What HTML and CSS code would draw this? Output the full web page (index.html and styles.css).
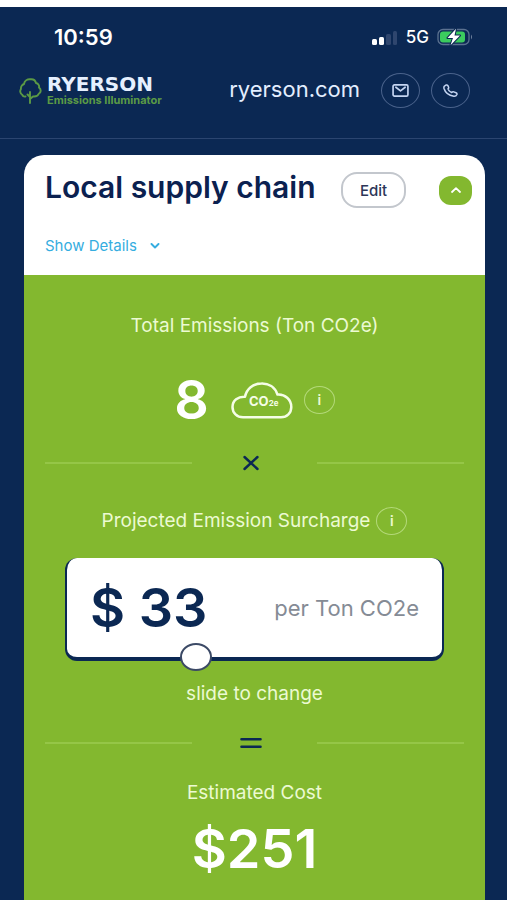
FILE: index.html
```html
<!DOCTYPE html>
<html lang="en">
<head>
<meta charset="utf-8">
<meta name="viewport" content="width=device-width, initial-scale=1">
<title>Ryerson Emissions Illuminator</title>
<link rel="stylesheet" href="styles.css">
</head>
<body>
<div class="status">
  <span class="time">10:59</span>
  <div class="signals">
    <svg width="26" height="16" viewBox="0 0 26 16" aria-hidden="true">
      <rect x="0" y="10" width="5" height="6" rx="1.500" fill="#fff"/>
      <rect x="7" y="8" width="5" height="8" rx="1.500" fill="#fff"/>
      <rect x="14" y="5" width="5" height="11" rx="1.500" fill="#2f466e"/>
      <rect x="21" y="2" width="4" height="14" rx="1.500" fill="#2f466e"/>
    </svg>
    <span class="network">5G</span>
    <svg width="36" height="18" viewBox="0 0 36 18" aria-hidden="true">
      <rect x="1" y="1.500" width="31" height="15" rx="5" fill="none" stroke="#5b7190" stroke-width="1.300"/>
      <rect x="3" y="3.500" width="25" height="11" rx="3" fill="#3bcb5e"/>
      <path d="M34 6.500Q36 9 34 11.500Z" fill="#71839f"/>
      <path d="M19 .8 10.500 10H16L13.500 17.200 23 7.500H17.500Z" fill="#fff" stroke="#0b2853" stroke-width="2" paint-order="stroke" stroke-linejoin="round"/>
    </svg>
  </div>
</div>
<header class="header">
  <a class="brand" href="#">
    <svg width="23" height="26" viewBox="0 0 23 26" fill="none" stroke="#5b9a45" stroke-width="1.900" stroke-linecap="round" stroke-linejoin="round" aria-hidden="true">
      <path d="M6.500 18.500C4.500 19 3.500 17.500 3 16.500 1 15.500 .8 12.500 2 11 1.500 8.500 3.500 6.500 5 6 5.500 2.500 8.500 1 11.500 1.300 14.500 1 16.500 3 17 5 19.500 5.500 20.500 8 20 9.500 22.500 11.500 22 14.500 20 15.500 19 18 16.500 18.800 14 18.500L11 21M11 25V14M11 19 8.500 16.500"/>
    </svg>
    <span class="brand-text">
      <span class="brand-name">RYERSON</span>
      <span class="brand-sub">Emissions Illuminator</span>
    </span>
  </a>
  <nav class="links">
    <a class="site" href="#">ryerson.com</a>
    <a class="round" href="#" aria-label="Email">
      <svg width="17" height="13" viewBox="0 0 18 14" fill="none" stroke="#c5d5f2" stroke-width="1.800" stroke-linejoin="round" stroke-linecap="round"><rect x="1" y="1" width="16" height="12" rx="1.500"/><path d="M4 3.500 9 7.500 14 3.500"/></svg>
    </a>
    <a class="round" href="#" aria-label="Call">
      <svg width="15" height="13" viewBox="0 0 15 13" fill="none" stroke="#c5d5f2" stroke-width="1.500" stroke-linejoin="round"><path d="M1.200 2.300 3 1Q4.300 .6 4.900 1.600L5.600 3.300Q5.900 4.300 5 4.900 5.500 7.200 8.600 8.600 9.600 7.500 10.800 7.900L13 8.700Q14.300 9.300 13.900 10.500 13 12.500 10.800 12.200 3 11 1 4.500 .7 3.200 1.200 2.300Z"/></svg>
    </a>
  </nav>
</header>
<main class="card">
  <section class="card-head">
    <div class="title-row">
      <h1 class="title">Local supply chain</h1>
      <button class="edit" type="button">Edit</button>
      <button class="toggle" type="button" aria-label="Collapse">
        <svg width="10" height="6" viewBox="0 0 10 6" fill="none" stroke="#fff" stroke-width="1.800" stroke-linecap="round" stroke-linejoin="round"><path d="M1 5 5 1.200 9 5"/></svg>
      </button>
    </div>
    <button class="details" type="button">Show Details
      <svg width="10" height="6" viewBox="0 0 10 6" fill="none" stroke="#35ade0" stroke-width="1.900" stroke-linecap="round" stroke-linejoin="round" aria-hidden="true"><path d="M1.500 1 5 4.500 8.500 1"/></svg>
    </button>
  </section>
  <section class="calc">
    <h2 class="label">Total Emissions (Ton CO2e)</h2>
    <div class="total">
      <span class="figure">8</span>
      <svg class="cloud" width="62" height="37" viewBox="0 0 62 37" role="img" aria-label="CO2e">
        <path d="M12 35.300H50C56 35.300 60.300 31 60.300 25 60.300 17.500 54 12 46.500 12.600 44 5 37.500 1.300 30.500 1.500 22 1.500 15.500 7 14 14.800 7 14.500 1.500 18.500 1.500 25 1.500 31 6 35.300 12 35.300Z" fill="none" stroke="#f5fde7" stroke-width="2.500" stroke-linejoin="round"/>
        <text class="cloud-text" x="18" y="24">CO<tspan class="cloud-small">2e</tspan></text>
      </svg>
      <button class="info" type="button" aria-label="About total emissions">i</button>
    </div>
    <div class="divider">
      <span class="line"></span>
      <svg class="mark" width="16" height="16" viewBox="0 0 16 16" fill="none" stroke="#0b2853" stroke-width="2.400" stroke-linecap="round" aria-hidden="true"><path d="M1.500 2 14.500 14M14.500 2 1.500 14"/></svg>
      <span class="line"></span>
    </div>
    <div class="surcharge">
      <label class="label" for="rate">Projected Emission Surcharge</label>
      <button class="info" type="button" aria-label="About surcharge">i</button>
    </div>
    <div class="rate-box">
      <output class="rate" for="rate">$ 33</output>
      <span class="unit">per Ton CO2e</span>
      <input class="slider" id="rate" type="range" min="0" max="100" value="33">
    </div>
    <p class="label hint">slide to change</p>
    <div class="divider">
      <span class="line"></span>
      <svg class="mark" width="22" height="12" viewBox="0 0 22 12" fill="none" stroke="#0b2853" stroke-width="2.600" stroke-linecap="round" aria-hidden="true"><path d="M1.500 2.300H20.500M1.500 9.700H20.500"/></svg>
      <span class="line"></span>
    </div>
    <h2 class="label cost-label">Estimated Cost</h2>
    <p class="figure cost">$251</p>
  </section>
</main>
</body>
</html>
```
FILE: styles.css
```css
* {
  box-sizing: border-box;
}

body {
  margin: 0;
  min-height: 100vh;
  display: flex;
  flex-direction: column;
  border-top: 7px solid #fff;
  background: #0b2853;
  color: #fff;
  font-family: Inter, "Liberation Sans", sans-serif;
}

h1, h2, p {
  margin: 0;
}

a {
  color: inherit;
  text-decoration: none;
}

button {
  margin: 0;
  padding: 0;
  border: 0;
  background: none;
  font: inherit;
  cursor: pointer;
}

svg {
  display: block;
  flex: none;
}

.status {
  display: flex;
  align-items: center;
  justify-content: space-between;
  height: 60px;
  padding: 0 34px 0 54px;
}

.time {
  font-size: 22px;
  font-weight: 600;
}

.signals {
  display: flex;
  align-items: center;
  gap: 8px;
}

.network {
  font-size: 17px;
  font-weight: 500;
}

.header {
  display: flex;
  align-items: center;
  justify-content: space-between;
  height: 72px;
  padding: 0 37px 24px 19px;
  border-bottom: 1px solid #2b4570;
}

.brand {
  display: flex;
  align-items: center;
  gap: 5px;
}

.brand-text {
  display: flex;
  flex-direction: column;
}

.brand-name {
  font-family: "DejaVu Sans", sans-serif;
  font-size: 20px;
  font-weight: 700;
  line-height: 20px;
  color: #e6f0ff;
}

.brand-sub {
  font-size: 11px;
  font-weight: 700;
  line-height: 13px;
  color: #5b9a45;
}

.links {
  display: flex;
  align-items: center;
  gap: 11px;
}

.site {
  margin-right: 10px;
  padding-bottom: 4px;
  font-size: 22px;
  line-height: 26px;
  color: #e3eeff;
}

.round {
  display: grid;
  place-items: center;
  width: 39px;
  height: 35px;
  border: 1px solid #4a628b;
  border-radius: 50%;
}

.card {
  flex: 1;
  display: flex;
  flex-direction: column;
  margin: 16px 22px 0 24px;
  border-radius: 20px 20px 0 0;
  background: #fff;
  overflow: hidden;
}

.card-head {
  padding: 17px 13px 19px 21px;
}

.title-row {
  display: flex;
  align-items: center;
}

.title {
  align-self: flex-start;
  font-size: 30px;
  font-weight: 600;
  line-height: 30px;
  white-space: nowrap;
  color: #0b2150;
}

.edit {
  width: 65px;
  height: 36px;
  margin-left: auto;
  border: 2px solid #c3c7cd;
  border-radius: 16px;
  font-size: 15px;
  font-weight: 500;
  color: #2c3658;
}

.toggle {
  display: grid;
  place-items: center;
  width: 33px;
  height: 29px;
  margin-left: 33px;
  border-radius: 12px;
  background: #83b82f;
}

.details {
  display: flex;
  align-items: center;
  gap: 13px;
  margin-top: 28px;
  font-size: 15px;
  line-height: 20px;
  color: #35ade0;
}

.calc {
  flex: 1;
  padding: 38px 21px 21px;
  background: #83b82f;
  text-align: center;
}

.label {
  font-size: 19px;
  font-weight: 400;
  line-height: 26px;
  color: #ecfad2;
}

.figure {
  font-size: 54px;
  font-weight: 600;
  line-height: 60px;
  color: #fff;
}

.total {
  display: flex;
  align-items: center;
  justify-content: center;
  margin-top: 31px;
}

.cloud {
  margin: 0 11px 0 22px;
}

.cloud-text {
  font-size: 13px;
  font-weight: 700;
  fill: #f5fde7;
}

.cloud-small {
  font-size: 8px;
}

.info {
  width: 31px;
  height: 28px;
  border: 1px solid #b4d97a;
  border-radius: 50%;
  font-size: 14px;
  font-weight: 600;
  line-height: 24px;
  color: #ecfad2;
}

.divider {
  display: grid;
  grid-template-columns: 7fr 6fr 7fr;
  align-items: center;
  justify-items: center;
  height: 24px;
  margin-top: 21px;
}

.line {
  width: 100%;
  height: 2px;
  background: #95c647;
}

.mark {
  margin-right: 6px;
}

.surcharge {
  display: flex;
  align-items: center;
  justify-content: center;
  gap: 6px;
  margin-top: 32px;
}

.rate-box {
  position: relative;
  display: flex;
  align-items: center;
  justify-content: space-between;
  height: 103px;
  margin: 23px 20px 0;
  padding: 0 23px;
  border: 2px solid #0b2853;
  border-width: 0 2px 4px;
  border-radius: 12px;
  background: #fff;
}

.rate {
  font-size: 54px;
  font-weight: 600;
  color: #0b2853;
}

.unit {
  font-size: 22px;
  color: #858b95;
}

.slider {
  position: absolute;
  left: 0;
  right: 0;
  bottom: -14px;
  width: 100%;
  height: 28px;
  margin: 0;
  appearance: none;
  background: transparent;
}

.slider::-webkit-slider-thumb {
  appearance: none;
  width: 32px;
  height: 28px;
  border: 2px solid #3c4a66;
  border-radius: 50%;
  background: #fff;
}

.hint {
  margin: 20px 0 24px;
}

.cost-label {
  margin-top: 25px;
}

.cost {
  margin-top: 13px;
}
```
